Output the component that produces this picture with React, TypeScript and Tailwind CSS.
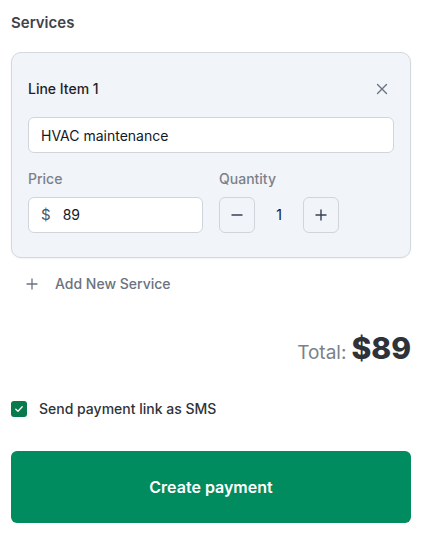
import React, { useState } from "react";

const App: React.FC = () => {
  const [qty, setQty] = useState(1);
  const [price, setPrice] = useState("89");
  const [name, setName] = useState("HVAC maintenance");
  const [sms, setSms] = useState(true);

  const total = (Number(price) || 0) * qty;

  return (
    <div
      className="w-[423px] min-h-[539px] bg-white pl-[11px] pr-[12px] pt-[13px] text-[#374151]"
      style={{ fontFamily: "Inter, 'Noto Sans', sans-serif" }}
    >
      <h2 className="text-[15px] leading-5 font-semibold text-[#3f434a]">Services</h2>

      {/* line item card */}
      <div className="mt-[19px] rounded-[10px] border border-[#d4d7dc] bg-[#f1f4f9] px-4 pt-[26px] pb-6 shadow-[0_1px_2px_rgba(0,0,0,0.05)]">
        <div className="flex h-5 items-center justify-between">
          <span className="text-sm font-medium text-[#1f2328]">Line Item 1</span>
          <button className="mr-[5px] text-[#6b7280]">
            <svg width="14" height="14" viewBox="0 0 14 14" fill="none" stroke="currentColor" strokeWidth="1.4" strokeLinecap="round">
              <path d="M2.5 2.5l9 9M11.5 2.5l-9 9" />
            </svg>
          </button>
        </div>

        <input
          value={name}
          onChange={(e) => setName(e.target.value)}
          className="mt-[18px] h-9 w-full rounded-md border border-[#d1d5db] bg-white px-3 text-sm text-[#111827] outline-none"
        />

        <div className="mt-4 flex gap-4">
          <div className="w-[175px]">
            <div className="text-sm leading-5 font-medium text-[#7b818a]">Price</div>
            <div className="mt-2 flex h-9 items-center rounded-md border border-[#d1d5db] bg-white px-3">
              <span className="text-[15px] text-[#4b5563]">$</span>
              <input
                value={price}
                onChange={(e) => setPrice(e.target.value)}
                className="ml-[12px] w-full bg-transparent text-sm text-[#111827] outline-none"
              />
            </div>
          </div>
          <div>
            <div className="text-sm leading-5 font-medium text-[#7b818a]">Quantity</div>
            <div className="mt-2 flex items-center">
              <button
                onClick={() => setQty(Math.max(1, qty - 1))}
                className="flex h-9 w-9 items-center justify-center rounded-md border border-[#d1d5db] bg-[#f1f4f9] text-[#374151]"
              >
                <svg width="12" height="12" viewBox="0 0 12 12" stroke="currentColor" strokeWidth="1.4" strokeLinecap="round">
                  <path d="M1 6h10" />
                </svg>
              </button>
              <span className="w-12 text-center text-sm text-[#111827]">{qty}</span>
              <button
                onClick={() => setQty(qty + 1)}
                className="flex h-9 w-9 items-center justify-center rounded-md border border-[#d1d5db] bg-[#f1f4f9] text-[#374151]"
              >
                <svg width="12" height="12" viewBox="0 0 12 12" stroke="currentColor" strokeWidth="1.4" strokeLinecap="round">
                  <path d="M1 6h10M6 1v10" />
                </svg>
              </button>
            </div>
          </div>
        </div>
      </div>

      <button className="mt-4 flex h-5 items-center pl-[15px] text-sm font-medium text-[#6b7280]">
        <svg width="12" height="12" viewBox="0 0 12 12" stroke="currentColor" strokeWidth="1.3" strokeLinecap="round">
          <path d="M1 6h10M6 1v10" />
        </svg>
        <span className="ml-[17px]">Add New Service</span>
      </button>

      <div className="mt-9 flex h-9 items-baseline justify-end">
        <span className="text-[19px] text-[#7b818a]">Total:</span>
        <span className="ml-[5px] text-[30px] leading-9 font-extrabold text-[#2f3338]">${total}</span>
      </div>

      <label className="mt-[33px] flex h-5 items-center">
        <button
          onClick={() => setSms(!sms)}
          className={`flex h-4 w-4 items-center justify-center rounded-[3px] ${sms ? "bg-[#087a4b]" : "border border-[#d1d5db] bg-white"}`}
        >
          {sms && (
            <svg width="10" height="10" viewBox="0 0 10 10" fill="none" stroke="white" strokeWidth="1.3" strokeLinecap="round" strokeLinejoin="round">
              <path d="M1.8 5.2l2.2 2.1 4.2-4.6" />
            </svg>
          )}
        </button>
        <span className="ml-3 text-sm font-medium text-[#2f3338]">Send payment link as SMS</span>
      </label>

      <button className="mt-8 h-[72px] w-full rounded-md bg-[#008c5f] text-base font-semibold text-white">
        Create payment
      </button>
    </div>
  );
};

export default App;
